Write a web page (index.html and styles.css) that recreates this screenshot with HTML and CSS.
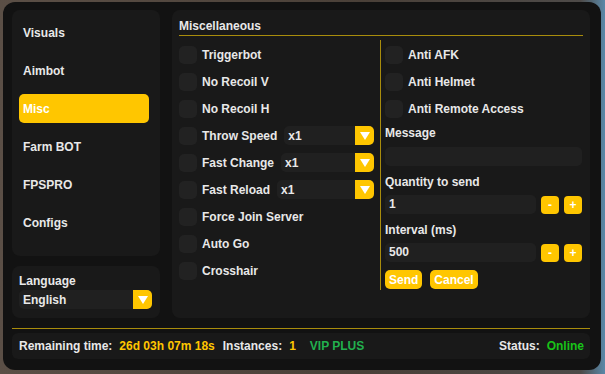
FILE: index.html
```html
<!DOCTYPE html>
<html lang="en">
<head>
  <meta charset="UTF-8" />
  <title>Menu</title>
  <link rel="stylesheet" href="styles.css">
</head>
<body>

  <div class="window">
    <div class="top">

      <!-- Sidebar -->
      <div class="side">
        <div class="tabs">
          <div class="tab">Visuals</div>
          <div class="tab">Aimbot</div>
          <div class="tab active">Misc</div>
          <div class="tab">Farm BOT</div>
          <div class="tab">FPSPRO</div>
          <div class="tab">Configs</div>
        </div>
        <div class="lang">
          <div class="lang-label">Language</div>
          <div class="select"><span class="value">English</span><span class="arrow"></span></div>
        </div>
      </div>

      <!-- Main panel -->
      <div class="main">
        <div class="title">Miscellaneous</div>
        <div class="cols">
          <div class="col col-left">
            <div class="row"><span class="box"></span><span class="label">Triggerbot</span></div>
            <div class="row"><span class="box"></span><span class="label">No Recoil V</span></div>
            <div class="row"><span class="box"></span><span class="label">No Recoil H</span></div>
            <div class="row"><span class="box"></span><span class="label">Throw Speed</span>
              <div class="select grow"><span class="value">x1</span><span class="arrow"></span></div></div>
            <div class="row"><span class="box"></span><span class="label">Fast Change</span>
              <div class="select grow"><span class="value">x1</span><span class="arrow"></span></div></div>
            <div class="row"><span class="box"></span><span class="label">Fast Reload</span>
              <div class="select grow"><span class="value">x1</span><span class="arrow"></span></div></div>
            <div class="row"><span class="box"></span><span class="label">Force Join Server</span></div>
            <div class="row"><span class="box"></span><span class="label">Auto Go</span></div>
            <div class="row"><span class="box"></span><span class="label">Crosshair</span></div>
          </div>
          <div class="col col-right">
            <div class="row"><span class="box"></span><span class="label">Anti AFK</span></div>
            <div class="row"><span class="box"></span><span class="label">Anti Helmet</span></div>
            <div class="row"><span class="box"></span><span class="label">Anti Remote Access</span></div>

            <div class="field-label first">Message</div>
            <div class="input"></div>

            <div class="field-label">Quantity to send</div>
            <div class="stepper">
              <div class="input">1</div>
              <button class="step">-</button>
              <button class="step">+</button>
            </div>

            <div class="field-label">Interval (ms)</div>
            <div class="stepper">
              <div class="input">500</div>
              <button class="step">-</button>
              <button class="step">+</button>
            </div>

            <div class="actions">
              <button class="btn">Send</button>
              <button class="btn">Cancel</button>
            </div>
          </div>
        </div>
      </div>
    </div>

    <div class="divider"></div>

    <!-- Footer -->
    <div class="footer">
      <span class="k">Remaining time:</span>
      <span class="v yellow">26d 03h 07m 18s</span>
      <span class="k">Instances:</span>
      <span class="v yellow">1</span>
      <span class="vip">VIP PLUS</span>
      <span class="spacer"></span>
      <span class="k">Status:</span>
      <span class="online">Online</span>
    </div>
  </div>

</body>
</html>
```

FILE: styles.css
```css
body {
  margin: 0;
  padding: 0;
  background: linear-gradient(90deg, #5b4f46 0%, #4a4038 60%, #4d4a48 96%, #5a88a8 100%);
  font-family: "Liberation Sans", Arial, sans-serif;
  font-size: 12px;
  font-weight: bold;
  color: #e8e8e8;
  height: 374px;
  overflow: hidden;
}

.window {
  box-sizing: border-box;
  width: 598px;
  height: 368px;
  margin: 2px 0 0 3px;
  padding: 8px 11px 11px 9px;
  background: #121212;
  border-radius: 12px;
  display: flex;
  flex-direction: column;
}

.top {
  display: flex;
  gap: 12px;
  height: 308px;
}

/* Sidebar */
.side {
  width: 148px;
  display: flex;
  flex-direction: column;
  gap: 10px;
}

.tabs {
  flex: 1;
  background: #191919;
  border-radius: 8px;
  padding: 8px 11px 0 7px;
  display: flex;
  flex-direction: column;
  gap: 9px;
}

.tab {
  height: 29px;
  line-height: 31px;
  padding-left: 4px;
  border-radius: 5px;
}

.tab.active {
  background: #ffc600;
  color: #fff;
  line-height: 30px;
}

.lang {
  height: 52px;
  box-sizing: border-box;
  background: #191919;
  border-radius: 8px;
  padding: 8px 8px 0 7px;
}

.lang-label {
  line-height: 14px;
  margin-bottom: 2px;
}

/* Select */
.select {
  height: 19px;
  background: #202020;
  border-radius: 5px;
  display: flex;
  align-items: center;
}

.select .value {
  flex: 1;
  padding-left: 4px;
}

.select .arrow {
  width: 19px;
  height: 19px;
  background: #ffc600;
  border-radius: 0 5px 5px 0;
  display: flex;
  align-items: center;
  justify-content: center;
}

.select .arrow::after {
  content: "";
  border-left: 5px solid transparent;
  border-right: 5px solid transparent;
  border-top: 8px solid #fff;
  margin-top: 1px;
}

.select.grow {
  flex: 1;
  margin-left: 7px;
}

/* Main panel */
.main {
  width: 418px;
  box-sizing: border-box;
  background: #191919;
  border-radius: 8px;
  padding: 9px 7px 0 7px;
}

.title {
  line-height: 14px;
  padding-bottom: 2px;
  border-bottom: 1px solid #a88c0c;
}

.cols {
  display: flex;
  margin-top: 4px;
  height: 250px;
}

.col-left {
  width: 195px;
  padding: 5px 6px 0 0;
  border-right: 1px solid #a88c0c;
}

.col-right {
  flex: 1;
  padding: 5px 0 0 4px;
}

.row {
  display: flex;
  align-items: center;
  height: 19px;
  margin-bottom: 8px;
}

.box {
  width: 18px;
  height: 18px;
  background: #222;
  border-radius: 5px;
  flex-shrink: 0;
}

.row .label {
  margin-left: 5px;
  white-space: nowrap;
}

.field-label {
  line-height: 14px;
  margin: 9px 0 6px 0;
}

.field-label.first {
  margin-top: 1px;
  margin-bottom: 7px;
}

.input {
  height: 19px;
  line-height: 19px;
  background: #202020;
  border-radius: 5px;
  padding-left: 4px;
  margin-right: 1px;
}

.stepper {
  display: flex;
  align-items: center;
  gap: 5px;
}

.stepper .input {
  flex: 1;
  margin-right: 0;
}

button {
  font-family: inherit;
  font-weight: bold;
  font-size: 12px;
  color: #fff;
  background: #ffc600;
  border: none;
  padding: 0;
  cursor: pointer;
}

.step {
  width: 18px;
  height: 18px;
  border-radius: 4px;
  line-height: 18px;
}

.stepper .step:last-child {
  margin-right: 1px;
}

.actions {
  display: flex;
  gap: 8px;
  margin-top: 8px;
}

.btn {
  height: 19px;
  padding: 0 4px;
  border-radius: 5px;
}

/* Footer */
.divider {
  height: 1px;
  background: #a88c0c;
  margin-top: 10px;
}

.footer {
  margin-top: 4px;
  height: 26px;
  background: #191919;
  border-radius: 6px;
  display: flex;
  align-items: center;
  padding: 0 6px 0 7px;
}

.footer .k {
  margin-right: 7px;
}

.footer .v {
  margin-right: 8px;
}

.yellow {
  color: #ffc600;
}

.vip {
  color: #22b04e;
  margin-left: 6px;
}

.spacer {
  flex: 1;
}

.online {
  color: #18c418;
}
```
